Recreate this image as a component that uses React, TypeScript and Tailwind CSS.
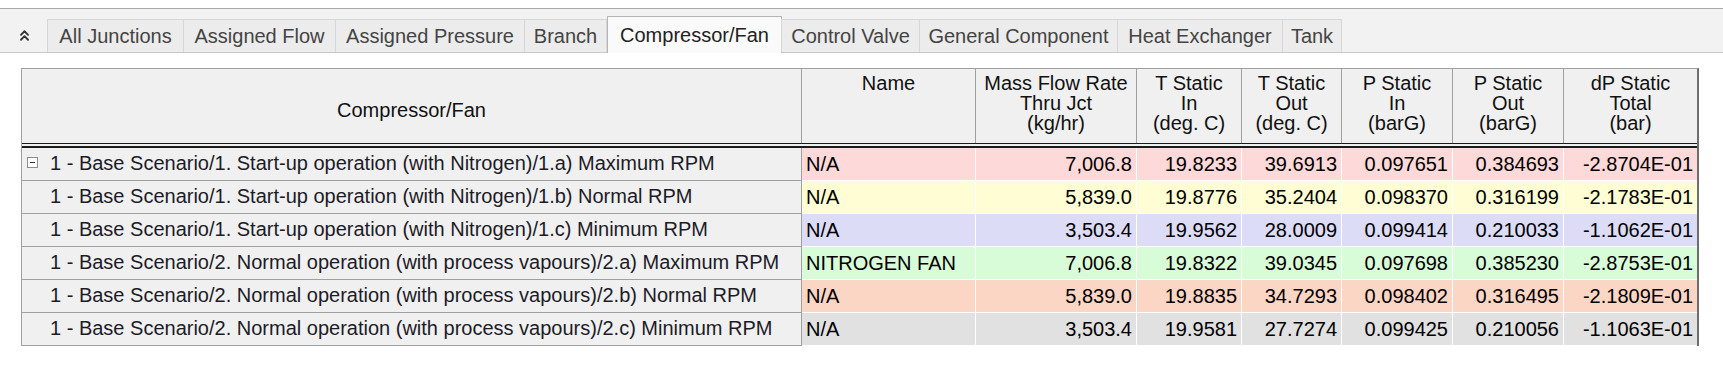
import React from 'react';
import { ChevronsUp } from 'lucide-react';

const tabs = [
  { label: 'All Junctions', w: 'w-[137px]' },
  { label: 'Assigned Flow', w: 'w-[153px]' },
  { label: 'Assigned Pressure', w: 'w-[190px]' },
  { label: 'Branch', w: 'w-[83px]' },
  { label: 'Compressor/Fan', w: 'w-[175px]', active: true },
  { label: 'Control Valve', w: 'w-[139px]' },
  { label: 'General Component', w: 'w-[199px]' },
  { label: 'Heat Exchanger', w: 'w-[166px]' },
  { label: 'Tank', w: 'w-[60px]' },
];

const rows = [
  { title: '1 - Base Scenario/1. Start-up operation (with Nitrogen)/1.a) Maximum RPM', name: 'N/A', v: ['7,006.8', '19.8233', '39.6913', '0.097651', '0.384693', '-2.8704E-01'], bg: 'bg-[#fdd9d9]', group: true },
  { title: '1 - Base Scenario/1. Start-up operation (with Nitrogen)/1.b) Normal RPM', name: 'N/A', v: ['5,839.0', '19.8776', '35.2404', '0.098370', '0.316199', '-2.1783E-01'], bg: 'bg-[#fefdd4]' },
  { title: '1 - Base Scenario/1. Start-up operation (with Nitrogen)/1.c) Minimum RPM', name: 'N/A', v: ['3,503.4', '19.9562', '28.0009', '0.099414', '0.210033', '-1.1062E-01'], bg: 'bg-[#dcdcf7]' },
  { title: '1 - Base Scenario/2. Normal operation (with process vapours)/2.a) Maximum RPM', name: 'NITROGEN FAN', v: ['7,006.8', '19.8322', '39.0345', '0.097698', '0.385230', '-2.8753E-01'], bg: 'bg-[#d8fbd8]' },
  { title: '1 - Base Scenario/2. Normal operation (with process vapours)/2.b) Normal RPM', name: 'N/A', v: ['5,839.0', '19.8835', '34.7293', '0.098402', '0.316495', '-2.1809E-01'], bg: 'bg-[#fcd6c5]' },
  { title: '1 - Base Scenario/2. Normal operation (with process vapours)/2.c) Minimum RPM', name: 'N/A', v: ['3,503.4', '19.9581', '27.7274', '0.099425', '0.210056', '-1.1063E-01'], bg: 'bg-[#e1e1e1]' },
];

// column widths for Mass Flow .. dP Static
const colW = ['w-[161px]', 'w-[105px]', 'w-[100px]', 'w-[111px]', 'w-[111px]', 'w-[133px]'];

const headers = [
  ['Mass Flow Rate', 'Thru Jct', '(kg/hr)'],
  ['T Static', 'In', '(deg. C)'],
  ['T Static', 'Out', '(deg. C)'],
  ['P Static', 'In', '(barG)'],
  ['P Static', 'Out', '(barG)'],
  ['dP Static', 'Total', '(bar)'],
];

export default function App() {
  return (
    <div className="w-[1723px] h-[369px] overflow-hidden bg-white font-['Liberation_Sans',Arial,sans-serif] text-[20px] leading-[20px]">
      {/* tab strip */}
      <div className="mt-[8px] h-[45px] border-t border-b border-t-[#a9a9a9] border-b-[#c9c9c9] bg-[#f2f2f2] flex items-end">
        <div className="w-[48px] h-[33px] flex items-center pl-[16px] text-[#333]">
          <ChevronsUp size={17} strokeWidth={2.6} />
        </div>
        {tabs.map((t) =>
          t.active ? (
            <div key={t.label} className={`${t.w} h-[37px] -mb-px bg-[#fafafa] border border-b-0 border-[#b5b5b5] flex items-center justify-center text-[#222]`}>
              {t.label}
            </div>
          ) : (
            <div key={t.label} className={`${t.w} h-[33px] bg-[#ececec] border-l border-t border-r border-[#d6d6d6] -ml-px first:ml-0 flex items-center justify-center text-[#444]`}>
              {t.label}
            </div>
          )
        )}
      </div>

      {/* grid */}
      <div className="mt-[15px] ml-[21px] w-[1678px] border-l border-t border-[#a0a0a0] border-r-2 border-r-[#6e6e6e] text-[#111]">
        <div className="flex h-[74px] bg-[#f0f0f0]">
          <div className="w-[780px] border-r border-[#a0a0a0] flex items-center justify-center pt-[8px]">Compressor/Fan</div>
          <div className="w-[174px] border-r border-[#a0a0a0] text-center pt-[4px]">Name</div>
          {headers.map((h, i) => (
            <div key={i} className={`${colW[i]} ${i < 5 ? 'border-r' : ''} border-[#a0a0a0] text-center pt-[4px] flex flex-col`}>
              {h.map((line) => (
                <span key={line}>{line}</span>
              ))}
            </div>
          ))}
        </div>
        <div className="h-[5px] border-t border-b-2 border-[#1b1b1b] bg-[#f0f0f0]" />

        {rows.map((r) => (
          <div key={r.title} className="flex h-[33px]">
            <div className="w-[780px] bg-[#f0f0f0] border-r border-b border-[#a0a0a0] flex items-center text-[#1c1c28] whitespace-nowrap">
              <div className="w-[28px] flex justify-start pl-[5px] pb-[3px]">
                {r.group && (
                  <div className="w-[11px] h-[11px] border border-[#8d8d8d] bg-white flex items-center justify-center">
                    <div className="w-[5px] h-px bg-[#333]" />
                  </div>
                )}
              </div>
              <span className="pb-[2px]">{r.title}</span>
            </div>
            <div className={`w-[174px] ${r.bg} border-r border-b border-white flex items-center pl-[4px] text-black`}>{r.name}</div>
            {r.v.map((val, i) => (
              <div key={i} className={`${colW[i]} ${r.bg} ${i < 5 ? 'border-r' : ''} border-b border-white flex items-center justify-end pr-[4px] text-black`}>
                {val}
              </div>
            ))}
          </div>
        ))}
      </div>
    </div>
  );
}
